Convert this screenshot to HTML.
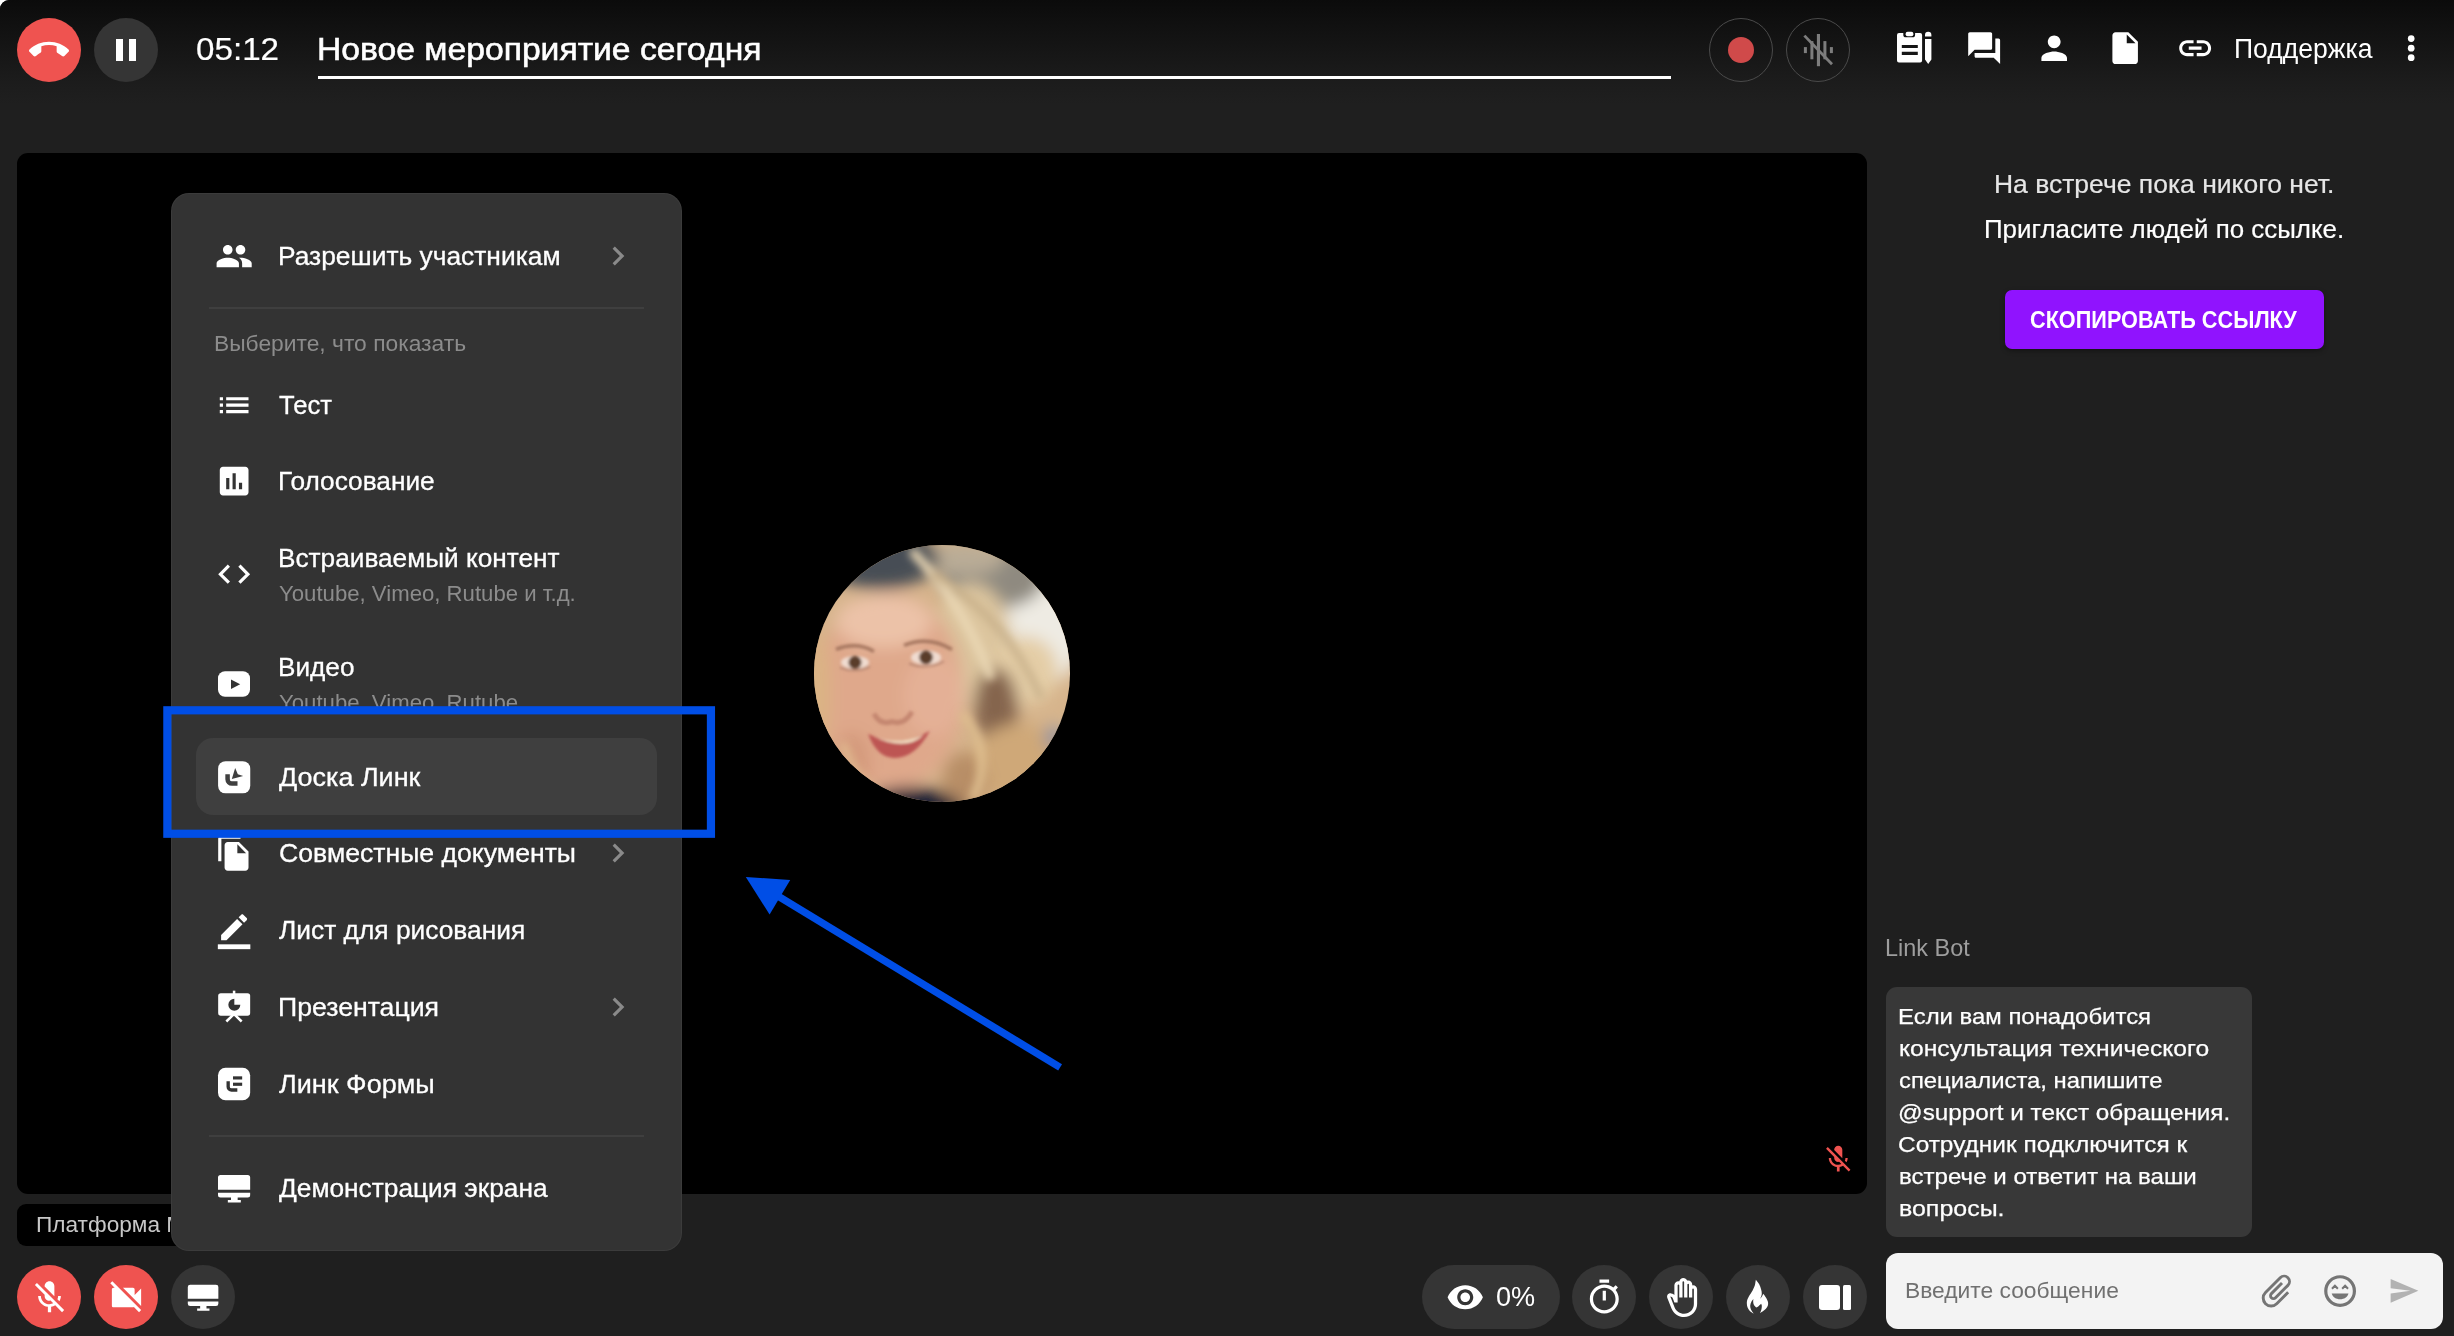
<!DOCTYPE html>
<html lang="ru">
<head>
<meta charset="utf-8">
<title>Новое мероприятие сегодня</title>
<style>
*{box-sizing:border-box;margin:0;padding:0}
html,body{width:2454px;height:1336px;overflow:hidden;background:#fff}
body{font-family:"Liberation Sans",sans-serif;color:#fff;position:relative}
#app{position:absolute;left:0;top:0;width:2454px;height:1336px;background:#1f1f1f;border-radius:9px 0 0 0;overflow:hidden}
#topgrad{position:absolute;left:0;top:0;width:2454px;height:120px;background:linear-gradient(to bottom,#0b0b0b 0,#101010 22px,#161616 52px,#1c1c1c 82px,#1f1f1f 104px)}
.abs{position:absolute}
.t{position:absolute;white-space:nowrap;line-height:1;transform-origin:0 50%}
.circ{position:absolute;width:64px;height:64px;border-radius:50%}
.red{background:#ef5350}
.grey{background:#353535}
.ring{border:1.5px solid #4a4a4a;background:transparent}
svg{position:absolute;display:block;overflow:visible}
/* video */
#video{position:absolute;left:17px;top:153px;width:1850px;height:1041px;background:#000;border-radius:11px}
#plabel{position:absolute;left:17px;top:1204px;width:300px;height:42px;background:#000;border-radius:9px}
/* menu */
#menu{position:absolute;left:171px;top:193px;width:511px;height:1058px;background:#333;border-radius:18px;overflow:hidden;box-shadow:inset 0 0 0 1px rgba(255,255,255,.045)}
.mi{position:absolute;left:108px;white-space:nowrap;font-size:25.5px;line-height:30px;color:#fff;transform-origin:0 50%;-webkit-text-stroke:0.3px #fff}
.ms{position:absolute;left:108px;white-space:nowrap;font-size:21.5px;line-height:26px;color:#8c8c8c;transform-origin:0 50%}
.ml{font-size:22px;line-height:32px;color:#fff;-webkit-text-stroke:0.25px #fff}
.hr{position:absolute;left:38px;width:435px;height:2px;background:#3f3f3f}
</style>
</head>
<body>
<div id="app">
<div id="topgrad"></div>

<!-- TOP BAR -->
<div class="circ red" style="left:17px;top:18px"></div>
<svg style="left:29px;top:30px" width="40" height="40" viewBox="0 0 24 24"><path fill="#fff" d="M12 9c-1.6 0-3.15.25-4.6.72v3.1c0 .39-.23.74-.56.9-.98.49-1.87 1.12-2.66 1.85-.18.18-.43.28-.7.28-.28 0-.53-.11-.71-.29L.29 13.08c-.18-.17-.29-.42-.29-.7 0-.28.11-.53.29-.71C3.34 8.78 7.46 7 12 7s8.66 1.78 11.71 4.67c.18.18.29.43.29.71 0 .28-.11.53-.29.71l-2.48 2.48c-.18.18-.43.29-.71.29-.27 0-.52-.11-.7-.28-.79-.74-1.69-1.36-2.67-1.85-.33-.16-.56-.5-.56-.9v-3.1C15.15 9.25 13.6 9 12 9z"/></svg>
<div class="circ grey" style="left:94px;top:18px"></div>
<div class="abs" style="left:116px;top:39px;width:7px;height:22px;background:#fff"></div>
<div class="abs" style="left:129px;top:39px;width:7px;height:22px;background:#fff"></div>
<div class="t" id="tm" style="left:196px;top:32.300px;font-size:32px;line-height:34px;-webkit-text-stroke:0.2px #fff;transform:scaleX(1.0370)">05:12</div>
<div class="t" id="ttl" style="left:316.800px;top:33px;font-size:31px;line-height:34px;-webkit-text-stroke:0.55px #fff;transform:scaleX(1.0860)">Новое мероприятие сегодня</div>
<div class="abs" style="left:318px;top:76px;width:1353px;height:3px;background:#fff"></div>

<div class="circ ring" style="left:1709px;top:18px"></div>
<div class="abs" style="left:1728px;top:37px;width:26px;height:26px;border-radius:50%;background:#d04a4a"></div>
<div class="circ ring" style="left:1786px;top:18px"></div>
<svg id="ic-noise" style="left:1800px;top:32px" width="36" height="36" viewBox="0 0 36 36"><g fill="#7d7d7d"><rect x="3.900" y="15.100" width="3" height="6"/><rect x="10.400" y="9.100" width="3" height="18.200"/><rect x="16.900" y="2" width="3.100" height="32.200"/><rect x="23.400" y="9.100" width="3" height="18.200"/><rect x="29.900" y="15.100" width="3" height="6"/></g><path d="M4.400 3.600L32 32.300" stroke="#7d7d7d" stroke-width="2.800" fill="none"/></svg>

<div class="t" id="sup" style="left:2233.700px;top:34px;font-size:27px;line-height:30px;transform:scaleX(0.9830)">Поддержка</div>

<!-- VIDEO -->
<div id="video"></div>
<div id="plabel"></div>
<div class="t" id="plt" style="left:36px;top:1212px;font-size:22px;line-height:26px;color:#c8c8c8;transform:scaleX(1.0300)">Платформа М</div>

<!-- BOTTOM BAR -->
<div class="circ red" style="left:17px;top:1265px"></div>
<div class="circ red" style="left:94px;top:1265px"></div>
<div class="circ grey" style="left:171px;top:1265px"></div>

<div class="abs grey" style="left:1422px;top:1265px;width:138px;height:64px;border-radius:32px"></div>
<div class="t" id="pct" style="left:1495.500px;top:1282.400px;font-size:27px;line-height:30px;transform:scaleX(1.003)">0%</div>
<div class="circ grey" style="left:1572px;top:1265px"></div>
<div class="circ grey" style="left:1649px;top:1265px"></div>
<div class="circ grey" style="left:1726px;top:1265px"></div>
<div class="circ grey" style="left:1803px;top:1265px"></div>

<div id="menu">
  <!-- row 1 -->
  <svg style="left:43.850px;top:43.850px" width="38.300" height="38.300" viewBox="0 0 24 24"><path fill="#fff" d="M16 11c1.66 0 2.99-1.34 2.99-3S17.66 5 16 5c-1.66 0-3 1.34-3 3s1.34 3 3 3zm-8 0c1.66 0 2.99-1.34 2.99-3S9.660 5 8 5C6.340 5 5 6.340 5 8s1.340 3 3 3zm0 2c-2.330 0-7 1.170-7 3.500V19h14v-2.500c0-2.330-4.670-3.500-7-3.500zm8 0c-.29 0-.62.02-.97.05 1.160.84 1.970 1.970 1.970 3.450V19h6v-2.500c0-2.330-4.670-3.500-7-3.500z"/></svg>
  <div class="mi" id="m1" style="left:107px;top:48px;transform:scaleX(1.0340)">Разрешить участникам</div>
  <svg class="chev" style="left:428px;top:44px" width="38" height="38" viewBox="0 0 24 24"><path fill="#8a8a8a" d="M10 6L8.590 7.410 13.170 12l-4.580 4.590L10 18l6-6z"/></svg>
  <div class="hr" style="top:114px"></div>
  <div class="t" id="hdr" style="left:42.500px;top:138px;font-size:21.500px;line-height:26px;color:#8c8c8c;transform:scaleX(1.0606)">Выберите, что показать</div>
  <!-- Тест -->
  <svg style="left:43.850px;top:192.850px" width="38.300" height="38.300" viewBox="0 0 24 24"><path fill="#fff" d="M3 13h2v-2H3v2zm0 4h2v-2H3v2zm0-8h2V7H3v2zm4 4h14v-2H7v2zm0 4h14v-2H7v2zM7 7v2h14V7H7z"/></svg>
  <div class="mi" id="m2" style="top:197px;transform:scaleX(1.0040)">Тест</div>
  <!-- Голосование -->
  <svg style="left:43.850px;top:268.850px" width="38.300" height="38.300" viewBox="0 0 24 24"><path fill="#fff" d="M19 3H5c-1.100 0-2 .9-2 2v14c0 1.100.9 2 2 2h14c1.100 0 2-.9 2-2V5c0-1.100-.9-2-2-2zM9 17H7v-7h2v7zm4 0h-2V7h2v10zm4 0h-2v-4h2v4z"/></svg>
  <div class="mi" id="m3" style="left:107px;top:273px;transform:scaleX(1.0290)">Голосование</div>
  <!-- Встраиваемый контент -->
  <svg style="left:43.850px;top:361.850px" width="38.300" height="38.300" viewBox="0 0 24 24"><path fill="#fff" d="M9.400 16.600L4.800 12l4.600-4.600L8 6l-6 6 6 6 1.400-1.400zm5.200 0l4.600-4.600-4.600-4.600L16 6l6 6-6 6-1.400-1.400z"/></svg>
  <div class="mi" id="m4" style="left:107px;top:350px;transform:scaleX(1.0280)">Встраиваемый контент</div>
  <div class="ms" id="m4s" style="left:107.5px;top:388px;transform:scaleX(1.0310)">Youtube, Vimeo, Rutube и т.д.</div>
  <!-- Видео -->
  <svg style="left:43px;top:471px" width="40" height="40" viewBox="0 0 24 24"><rect x="2.400" y="4.300" width="19.200" height="15.400" rx="4.200" fill="#fff"/><path fill="#333" d="M10.200 9.300v5.700l5.500-2.850z"/></svg>
  <div class="mi" id="m5" style="left:107px;top:459px;transform:scaleX(1.0260)">Видео</div>
  <div class="ms" id="m5s" style="left:107.5px;top:497px;transform:scaleX(1.0310)">Youtube, Vimeo, Rutube</div>
  <!-- Совместные документы -->
  <svg style="left:43.900px;top:641.300px" width="38.300" height="38.300" viewBox="0 0 24 24"><path fill="#fff" d="M16 1H4c-1.100 0-2 .9-2 2v14h2V3h12V1zm-1 4l6 6v10c0 1.100-.9 2-2 2H7.990C6.890 23 6 22.100 6 21l.01-14c0-1.100.89-2 1.990-2h7zm-1 7h5.500L14 6.500V12z"/></svg>
  <div class="mi" id="m6" style="left:107.5px;top:645px;transform:scaleX(1.0440)">Совместные документы</div>
  <svg class="chev" style="left:428px;top:641px" width="38" height="38" viewBox="0 0 24 24"><path fill="#8a8a8a" d="M10 6L8.590 7.410 13.170 12l-4.580 4.590L10 18l6-6z"/></svg>
  <!-- Лист для рисования -->
  <svg style="left:43px;top:717px" width="40" height="40" viewBox="0 0 24 24"><g transform="translate(1.660 -0.020) scale(0.867)"><path fill="#fff" d="M3 17.250V21h3.750L17.810 9.940l-3.750-3.750L3 17.250zM20.710 7.040c.39-.39.39-1.020 0-1.410l-2.340-2.340c-.39-.39-1.020-.39-1.410 0l-1.830 1.830 3.750 3.750 1.830-1.830z"/></g><rect x="2.300" y="20.600" width="19.500" height="2.900" fill="#fff"/></svg>
  <div class="mi" id="m7" style="top:722px;transform:scaleX(1.0330)">Лист для рисования</div>
  <!-- Презентация -->
  <svg style="left:43px;top:794px" width="40" height="40" viewBox="0 0 24 24"><rect x="11.300" y="2.200" width="1.500" height="3" fill="#fff"/><path d="M12 16.200L7.400 20.700M12 16.200L16.600 20.700" stroke="#fff" stroke-width="1.500" fill="none"/><rect x="2.500" y="3.700" width="19.200" height="13.500" rx="1.600" fill="#fff"/><path fill="#333" d="M12.200 10.600V7a3.600 3.600 0 1 0 3.600 3.600z"/></svg>
  <div class="mi" id="m8" style="left:107px;top:799px;transform:scaleX(1.0450)">Презентация</div>
  <svg class="chev" style="left:428px;top:795px" width="38" height="38" viewBox="0 0 24 24"><path fill="#8a8a8a" d="M10 6L8.590 7.410 13.170 12l-4.580 4.590L10 18l6-6z"/></svg>
  <!-- Линк Формы -->
  <svg style="left:43px;top:871px" width="40" height="40" viewBox="0 0 24 24"><rect x="2.400" y="2.300" width="19.300" height="19.400" rx="4.500" fill="#fff"/><path d="M8.500 10.300V13.600a2 2 0 0 0 2 2H14" stroke="#333" stroke-width="2" fill="none"/><rect x="11.400" y="7.400" width="5.500" height="1.900" fill="#333"/><rect x="11.400" y="11.200" width="5.500" height="1.900" fill="#333"/></svg>
  <div class="mi" id="m9" style="top:876px;transform:scaleX(1.0600)">Линк Формы</div>
  <div class="hr" style="top:942px"></div>
  <!-- Демонстрация экрана -->
  <svg style="left:43px;top:975px" width="40" height="40" viewBox="0 0 24 24"><path fill="#fff" d="M3.900 4.200h16.300a1.500 1.500 0 0 1 1.500 1.500v7.400H2.400V5.700a1.500 1.500 0 0 1 1.500-1.500zM2.400 14.800h19.300v1.400a1.500 1.500 0 0 1-1.500 1.500H3.900a1.500 1.500 0 0 1-1.500-1.500zM10.200 17.700h4v1.500h-4zM8.300 19.200h7.800v1.500H8.300z"/></svg>
  <div class="mi" id="m10" style="top:980px;transform:scaleX(1.0305)">Демонстрация экрана</div>
</div>
<!--/MENU-->
<!-- top-right icons -->
<svg id="ic-notes" style="left:1892px;top:28px" width="44" height="40" viewBox="0 0 44 40"><path fill="#fff" d="M7 5h4.300v1.700a2.600 2.600 0 0 0 2.600 2.600h6.600a2.600 2.600 0 0 0 2.600-2.600V5h5a2 2 0 0 1 2 2v25.600a2 2 0 0 1-2 2H7a2 2 0 0 1-2-2V7a2 2 0 0 1 2-2zM9.800 17h16v3.100h-16zM9.800 23.800h16v3.100h-16z" fill-rule="evenodd"/><rect x="13.600" y="3.700" width="7.800" height="4.600" rx="2" fill="#fff"/><path fill="#fff" d="M33 8.500v-1.500a3.200 3.200 0 0 1 6.400 0v1.500zM33 11.100h6.400v20.500l-3.200 4.400-3.200-4.400z"/></svg>
<svg style="left:1965.200px;top:28.850px" width="38.300" height="38.300" viewBox="0 0 24 24"><path fill="#fff" d="M21 6h-2v9H6v2c0 .55.45 1 1 1h11l4 4V7c0-.55-.45-1-1-1zm-4 6V3c0-.55-.45-1-1-1H3c-.55 0-1 .45-1 1v14l4-4h10c.55 0 1-.45 1-1z"/></svg>
<svg style="left:2034.850px;top:28.850px" width="38.400" height="38.400" viewBox="0 0 24 24"><path fill="#fff" d="M12 12c2.210 0 4-1.790 4-4s-1.790-4-4-4-4 1.790-4 4 1.790 4 4 4zm0 2c-2.670 0-8 1.340-8 4v2h16v-2c0-2.660-5.330-4-8-4z"/></svg>
<svg style="left:2105.950px;top:28.850px" width="38.300" height="38.300" viewBox="0 0 24 24"><path fill="#fff" d="M6 2c-1.100 0-1.990.9-1.990 2L4 20c0 1.100.89 2 1.990 2H18c1.100 0 2-.9 2-2V8l-6-6H6zm7 7V3.500L18.500 9H13z"/></svg>
<svg style="left:2175.950px;top:29.200px" width="38.300" height="38.300" viewBox="0 0 24 24"><path fill="#fff" d="M3.900 12c0-1.710 1.390-3.100 3.100-3.100h4V7H7c-2.760 0-5 2.240-5 5s2.240 5 5 5h4v-1.900H7c-1.710 0-3.100-1.390-3.100-3.100zM8 13h8v-2H8v2zm9-6h-4v1.900h4c1.710 0 3.100 1.390 3.100 3.100s-1.390 3.100-3.100 3.100h-4V17h4c2.760 0 5-2.240 5-5s-2.240-5-5-5z"/></svg>
<svg style="left:2401px;top:28px" width="20" height="40" viewBox="0 0 20 40"><circle cx="10.200" cy="10.600" r="3.350" fill="#fff"/><circle cx="10.200" cy="20.200" r="3.350" fill="#fff"/><circle cx="10.200" cy="29.700" r="3.350" fill="#fff"/></svg>

<!-- right panel -->
<div class="t" id="r1" style="left:1994px;top:169.300px;-webkit-text-stroke:0.2px #e6e6e6;font-size:25.500px;line-height:30px;color:#e6e6e6;transform:scaleX(1.0385)">На встрече пока никого нет.</div>
<div class="t" id="r2" style="left:1984px;top:213.800px;-webkit-text-stroke:0.2px #fff;font-size:25.500px;line-height:30px;transform:scaleX(1.0160)">Пригласите людей по ссылке.</div>
<div class="abs" style="left:2005px;top:290px;width:319px;height:59px;border-radius:7px;background:#9013fe;box-shadow:0 2px 5px rgba(0,0,0,.35)"></div>
<div class="t" id="btn" style="left:2030px;top:307px;font-size:23.800px;line-height:26px;font-weight:bold;transform:scaleX(0.9106)">СКОПИРОВАТЬ ССЫЛКУ</div>

<div class="t" id="bot" style="left:1885.200px;top:935.300px;font-size:23.200px;line-height:26px;color:#9e9e9e;transform:scaleX(1.011)">Link Bot</div>
<div class="abs" style="left:1886px;top:987px;width:366px;height:250px;border-radius:11px;background:#383838"></div>
<div class="t ml" id="ml0" style="left:1898px;top:1001px;transform:scaleX(1.0870)">Если вам понадобится</div>
<div class="t ml" id="ml1" style="left:1898.600px;top:1033px;transform:scaleX(1.1200)">консультация технического</div>
<div class="t ml" id="ml2" style="left:1898.600px;top:1065px;transform:scaleX(1.0830)">специалиста, напишите</div>
<div class="t ml" id="ml3" style="left:1898px;top:1097px;transform:scaleX(1.1030)">@support и текст обращения.</div>
<div class="t ml" id="ml4" style="left:1898px;top:1129px;transform:scaleX(1.1100)">Сотрудник подключится к</div>
<div class="t ml" id="ml5" style="left:1898.600px;top:1161px;transform:scaleX(1.0950)">встрече и ответит на ваши</div>
<div class="t ml" id="ml6" style="left:1898.600px;top:1193px;transform:scaleX(1.1350)">вопросы.</div>

<div class="abs" style="left:1886px;top:1253px;width:557px;height:76px;border-radius:12px;background:#f3f3f3"></div>
<div class="t" id="ph" style="left:1904.800px;top:1278.300px;font-size:22.600px;line-height:26px;color:#707070;transform:scaleX(1.0095)">Введите сообщение</div>
<svg id="ic-attach" style="left:2256.600px;top:1270.800px" width="40" height="40" viewBox="0 0 24 24"><g transform="rotate(45 12 12)"><path d="M17.250 7.800V17.500a4.750 4.750 0 0 1-9.500 0V5a3.250 3.250 0 0 1 6.500 0V15.500a1.750 1.750 0 0 1-3.500 0V6.500" fill="none" stroke="#757575" stroke-width="1.750"/></g></svg>
<svg id="ic-emoji" style="left:2321px;top:1271.800px" width="38.200" height="38.200" viewBox="0 0 24 24"><circle cx="12" cy="12" r="9" fill="none" stroke="#757575" stroke-width="2"/><path d="M6.900 10.500L8.750 8.650L10.600 10.500M13.300 10.500L15.150 8.650L17 10.500" fill="none" stroke="#757575" stroke-width="1.300"/><path fill="#757575" d="M6.700 13.500H17.300C16.600 15.900 14.600 17.100 12 17.100C9.400 17.100 7.400 15.900 6.700 13.500z"/></svg>
<svg id="ic-send" style="left:2387.600px;top:1275.100px" width="31.700" height="31.700" viewBox="0 0 24 24"><path fill="#b2b2b2" d="M2.010 21L23 12 2.010 3 2 10l15 2-15 2z"/></svg>
<!-- bottom-left icons -->
<svg style="left:29.500px;top:1277.500px" width="39" height="39" viewBox="0 0 24 24"><path fill="#fff" d="M19 11h-1.700c0 .74-.16 1.430-.43 2.050l1.230 1.230c.56-.98.9-2.090.9-3.280zm-4.020.17c0-.06.02-.11.020-.17V5c0-1.660-1.340-3-3-3S9 3.340 9 5v.18l5.980 5.990zM4.270 3L3 4.270l6.010 6.010V11c0 1.660 1.330 3 2.990 3 .22 0 .44-.03.65-.08l1.660 1.660c-.71.33-1.500.52-2.310.52-2.760 0-5.300-2.100-5.300-5.100H5c0 3.410 2.720 6.230 6 6.720V21h2v-3.280c.91-.13 1.770-.45 2.540-.9L19.730 21 21 19.730 4.270 3z"/></svg>
<svg style="left:107px;top:1277.500px" width="39" height="39" viewBox="0 0 24 24"><path fill="#fff" d="M21 6.500l-4 4V7c0-.55-.45-1-1-1H9.820L21 17.180V6.500zM3.270 2L2 3.270 4.730 6H4c-.55 0-1 .45-1 1v10c0 .55.450 1 1 1h12c.21 0 .39-.08.54-.18L19.730 21 21 19.730 3.270 2z"/></svg>
<svg style="left:184px;top:1278px" width="38" height="38" viewBox="0 0 24 24"><path fill="#fff" d="M3.900 4.200h16.300a1.500 1.500 0 0 1 1.500 1.500v7.400H2.400V5.700a1.500 1.500 0 0 1 1.500-1.500zM2.400 14.800h19.300v1.400a1.500 1.500 0 0 1-1.500 1.500H3.900a1.500 1.500 0 0 1-1.500-1.500zM10.200 17.700h4v1.500h-4zM8.300 19.200h7.800v1.500H8.300z"/></svg>
<!-- bottom-right icons -->
<svg style="left:1446px;top:1278px" width="38.500" height="38.500" viewBox="0 0 24 24"><path fill="#fff" d="M12 4.500C7 4.500 2.730 7.610 1 12c1.730 4.390 6 7.500 11 7.500s9.270-3.110 11-7.500c-1.730-4.390-6-7.500-11-7.500zM12 17c-2.760 0-5-2.240-5-5s2.240-5 5-5 5 2.240 5 5-2.240 5-5 5zm0-8c-1.660 0-3 1.340-3 3s1.340 3 3 3 3-1.340 3-3-1.340-3-3-3z"/></svg>
<svg style="left:1585.200px;top:1277.800px" width="38.600" height="38.600" viewBox="0 0 24 24"><path fill="#fff" d="M15 1H9v2h6V1zm-4 13h2V8h-2v6zm8.030-6.610l1.420-1.420c-.43-.51-.9-.99-1.410-1.410l-1.420 1.420C16.070 4.740 14.120 4 12 4c-4.970 0-9 4.030-9 9s4.020 9 9 9 9-4.030 9-9c0-2.120-.74-4.070-1.970-5.610zM12 20c-3.870 0-7-3.130-7-7s3.130-7 7-7 7 3.130 7 7-3.130 7-7 7z"/></svg>
<svg style="left:1662.500px;top:1278px" width="39" height="39" viewBox="0 0 24 24"><path fill="#fff" d="M21,7c0-1.380-1.120-2.500-2.500-2.500c-0.170,0-0.340,0.020-0.500,0.050V4c0-1.380-1.120-2.500-2.500-2.500c-0.230,0-0.460,0.030-0.670,0.090 C14.460,0.660,13.560,0,12.500,0c-1.230,0-2.250,0.890-2.460,2.060C9.870,2.020,9.690,2,9.500,2C8.120,2,7,3.120,7,4.500v5.890 c-0.340-0.310-0.760-0.540-1.220-0.660L5.010,9.520c-0.830-0.230-1.700,0.090-2.190,0.830c-0.380,0.570-0.400,1.310-0.150,1.950l2.560,6.430 C6.490,21.910,9.570,24,12.990,24h0c4.420,0,8.010-3.580,8.010-8V7z M19,16c0,3.310-2.690,6-6,6h0c-2.610,0-4.950-1.590-5.910-4.010l-2.600-6.540 l0.530,0.140c0.460,0.120,0.830,0.460,1,0.900L7,15h2V4.500C9,4.220,9.220,4,9.500,4S10,4.220,10,4.500V12h2V2.500C12,2.220,12.220,2,12.500,2 S13,2.220,13,2.500V12h2V4c0-0.280,0.220-0.500,0.500-0.500S16,3.720,16,4v8h2V7c0-0.280,0.220-0.500,0.500-0.500S19,6.720,19,7L19,16z"/></svg>
<svg id="ic-fire" style="left:1733px;top:1272px" width="50" height="50" viewBox="0 0 50 50"><path fill="#fff" d="M22.83 7.86C23.39 8.61 25.33 10.79 26.20 12.35C27.07 13.91 27.64 15.64 28.07 17.20C28.50 18.76 28.86 20.33 28.80 21.70C28.74 23.07 28.13 24.40 27.70 25.40C27.27 26.40 26.45 27.32 26.20 27.70C26.60 27.25 27.92 26.00 28.60 25.00C29.28 24.00 30.02 22.25 30.30 21.70C30.73 22.32 32.12 24.03 32.90 25.40C33.68 26.77 34.68 28.52 35.00 29.90C35.32 31.28 35.15 32.57 34.80 33.70C34.45 34.83 33.72 35.77 32.90 36.70C32.08 37.63 30.89 38.55 29.90 39.30C28.91 40.05 27.44 40.88 26.95 41.20C27.19 40.57 28.09 38.65 28.40 37.40C28.71 36.15 28.86 34.63 28.80 33.70C28.75 32.77 28.19 32.12 28.07 31.80C27.69 32.15 26.58 33.28 25.80 33.90C25.02 34.52 23.80 35.23 23.40 35.50C22.99 35.07 21.49 33.83 20.96 32.90C20.43 31.97 20.29 30.89 20.20 29.90C20.11 28.91 20.37 27.44 20.40 26.95C20.05 27.44 18.83 28.77 18.30 29.90C17.77 31.02 17.26 32.45 17.20 33.70C17.14 34.95 17.39 36.10 17.96 37.40C18.53 38.70 20.16 40.82 20.60 41.50C19.97 41.07 17.80 39.89 16.80 38.90C15.80 37.91 15.09 36.73 14.60 35.55C14.11 34.37 13.92 33.05 13.85 31.80C13.78 30.55 13.82 29.38 14.20 28.07C14.57 26.76 15.22 25.51 16.10 23.95C16.98 22.39 18.53 20.38 19.46 18.70C20.39 17.02 21.20 15.28 21.70 13.85C22.20 12.42 22.26 11.10 22.45 10.10C22.64 9.10 22.77 8.23 22.83 7.86Z"/></svg>
<div class="abs" style="left:1819px;top:1284.500px;width:21px;height:25.500px;border-radius:3px;background:#fff"></div>
<div class="abs" style="left:1843px;top:1284.500px;width:8.300px;height:25.500px;border-radius:1.500px;background:#fff"></div>
<!-- mic off in video corner -->
<svg style="left:1821.750px;top:1142.950px" width="32.500" height="32.500" viewBox="0 0 24 24"><path fill="#ef5350" d="M19 11h-1.700c0 .74-.16 1.430-.43 2.050l1.230 1.230c.56-.98.9-2.090.9-3.280zm-4.020.17c0-.06.02-.11.020-.17V5c0-1.660-1.340-3-3-3S9 3.340 9 5v.18l5.980 5.990zM4.270 3L3 4.270l6.010 6.010V11c0 1.660 1.330 3 2.990 3 .22 0 .44-.03.65-.08l1.660 1.660c-.71.33-1.500.52-2.310.52-2.760 0-5.300-2.100-5.300-5.100H5c0 3.410 2.720 6.230 6 6.720V21h2v-3.280c.91-.13 1.770-.45 2.540-.9L19.730 21 21 19.730 4.270 3z"/></svg>
<!--/RIGHT-->
<!-- avatar -->
<svg id="avatar" style="left:814px;top:545px" width="256" height="257" viewBox="0 0 256 256" preserveAspectRatio="none">
<defs>
<clipPath id="avc"><circle cx="128" cy="128" r="128"/></clipPath>
<filter id="b8" x="-50%" y="-50%" width="200%" height="200%"><feGaussianBlur stdDeviation="8"/></filter>
<filter id="b5" x="-50%" y="-50%" width="200%" height="200%"><feGaussianBlur stdDeviation="4"/></filter>
<filter id="b3" x="-50%" y="-50%" width="200%" height="200%"><feGaussianBlur stdDeviation="1.800"/></filter>
</defs>
<g clip-path="url(#avc)">
<rect width="256" height="256" fill="#d6b48c"/>
<g filter="url(#b8)">
 <ellipse cx="232" cy="72" rx="40" ry="66" fill="#eeebe3"/>
 <ellipse cx="178" cy="34" rx="52" ry="30" fill="#8f8a80"/>
 <ellipse cx="150" cy="14" rx="40" ry="16" fill="#b9ac96"/>
 <ellipse cx="66" cy="14" rx="58" ry="30" fill="#474d55"/>
 <ellipse cx="158" cy="100" rx="40" ry="62" fill="#dcc59e"/>
 <ellipse cx="212" cy="125" rx="32" ry="34" fill="#e4cda6"/>
 <ellipse cx="76" cy="146" rx="74" ry="98" fill="#dfa88b"/>
 <ellipse cx="70" cy="76" rx="48" ry="26" fill="#ecc2a8"/>
 <ellipse cx="120" cy="150" rx="30" ry="40" fill="#e4b096"/>
 <ellipse cx="182" cy="162" rx="22" ry="40" fill="#85654e"/>
 <ellipse cx="206" cy="218" rx="48" ry="40" fill="#cfa878"/>
 <ellipse cx="150" cy="236" rx="22" ry="30" fill="#b88e66"/>
 <ellipse cx="96" cy="268" rx="54" ry="27" fill="#151c30"/>
 <ellipse cx="240" cy="192" rx="9" ry="12" fill="#8f93a3"/>
 <ellipse cx="3" cy="150" rx="13" ry="64" fill="#dab484"/>
 <ellipse cx="38" cy="216" rx="18" ry="30" fill="#d49a7c"/>
</g>
<g filter="url(#b5)" fill="none" stroke-linecap="round">
 <path d="M100 8Q150 60 176 130" stroke="#ead7b4" stroke-width="9"/>
 <path d="M120 30Q190 70 226 150" stroke="#c8b08a" stroke-width="7"/>
 <path d="M150 170Q180 210 160 250" stroke="#e0c090" stroke-width="8"/>
 <path d="M30 200Q40 230 60 246" stroke="#e2bd92" stroke-width="7"/>
</g>
<g filter="url(#b3)">
 <ellipse cx="41" cy="117" rx="14" ry="6.500" fill="#f0dcd0"/>
 <ellipse cx="112" cy="112" rx="15" ry="7" fill="#f0dcd0"/>
 <circle cx="41" cy="117" r="6.500" fill="#5a3c2c"/>
 <circle cx="112" cy="112" r="6.800" fill="#5a3c2c"/>
 <path d="M22 104Q42 96 60 106" stroke="#a5765e" stroke-width="3.500" fill="none"/>
 <path d="M90 100Q114 90 138 104" stroke="#a5765e" stroke-width="3.500" fill="none"/>
 <path d="M26 122Q41 128 56 121" stroke="#b98872" stroke-width="2" fill="none"/>
 <path d="M95 118Q112 125 130 116" stroke="#b98872" stroke-width="2" fill="none"/>
 <path d="M54 188Q84 204 116 185Q100 214 78 212Q62 210 54 188z" fill="#bd5452"/>
 <path d="M60 191Q84 200 110 189Q92 206 60 191z" fill="#f0dcc0"/>
 <path d="M60 168Q66 180 78 176Q90 180 98 166" stroke="#c48670" stroke-width="5" fill="none"/>
</g>
</g>
</svg>
<!-- highlighted item -->
<div class="abs" style="left:196px;top:738px;width:461px;height:77px;border-radius:17px;background:#3f3f3f"></div>
<svg style="left:214px;top:757px" width="40" height="40" viewBox="0 0 24 24"><rect x="2.450" y="2.500" width="19.300" height="19.300" rx="4.500" fill="#fff"/><path d="M8.150 10.300V13.300a2.650 2.650 0 0 0 2.650 2.650H14.100" stroke="#3f3f3f" stroke-width="2.700" fill="none"/><path fill="#3f3f3f" d="M12.700 6.600L14.300 10.350L17.500 11.350L10.700 13.200z"/></svg>
<div class="mi" id="dl" style="left:279px;top:762px;transform:scaleX(1.0570)">Доска Линк</div>
<!-- blue annotations -->
<svg style="left:0;top:0" width="2454" height="1336" viewBox="0 0 2454 1336"><rect x="167.350" y="710.300" width="543.600" height="123.450" fill="none" stroke="#004ee6" stroke-width="8.200"/><path d="M1060.100 1067.400L775.600 894.600" stroke="#004ee6" stroke-width="7.400" fill="none"/><path d="M745.800 877.100L790.200 879.900L769.600 914.500z" fill="#004ee6"/></svg>
<!--/OVERLAY-->
</div>
</body>
</html>
